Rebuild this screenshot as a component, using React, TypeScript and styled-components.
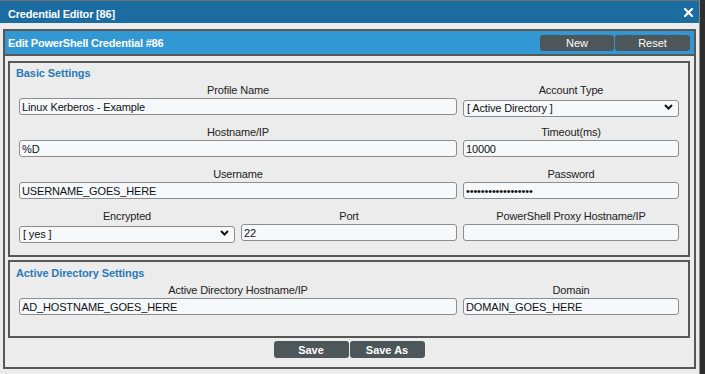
import React from 'react';
import styled, { createGlobalStyle } from 'styled-components';

const GlobalStyle = createGlobalStyle`
  html, body {
    margin: 0;
    padding: 0;
    background: #2e2e2e;
    font-family: "Liberation Sans", Arial, sans-serif;
  }
`;

const Dialog = styled.div`
  width: 699px;
  height: 373px;
  background: #ececec;
  border-top: 1px solid #6e6e6e;
  border-right: 1px solid #8a8a8a;
  display: flex;
  flex-direction: column;
`;

const TitleBar = styled.div`
  height: 22px;
  background: #1b6ca0;
  display: flex;
  align-items: center;
  justify-content: space-between;
  padding: 0 6px 0 8px;
  flex-shrink: 0;
`;

const TitleText = styled.span`
  color: #fff;
  font-size: 11px;
  font-weight: bold;
  line-height: 14px;
  letter-spacing: -0.2px;
  margin-top: 4px;
`;

const Body = styled.div`
  padding: 6px 3px 0 3px;
`;

const Frame = styled.div`
  border: 2px solid #575757;
  background: #ececec;
`;

const Header = styled.div`
  height: 23px;
  background: #3298d3;
  border-bottom: 2px solid #575757;
  display: flex;
  align-items: center;
  justify-content: space-between;
  padding: 0 4px 0 3px;
`;

const HeaderTitle = styled.span`
  color: #fff;
  font-size: 11px;
  font-weight: bold;
  line-height: 14px;
  letter-spacing: -0.2px;
  margin-top: 1px;
`;

const ButtonGroup = styled.div`
  display: flex;
  gap: 1px;
`;

const DarkButton = styled.button<{ $w: number; $h: number; $bold?: boolean }>`
  width: ${p => p.$w}px;
  height: ${p => p.$h}px;
  background: #4d5658;
  border: none;
  border-radius: 3px;
  color: #fff;
  font-family: "Liberation Sans", Arial, sans-serif;
  font-size: 11px;
  font-weight: ${p => (p.$bold ? 'bold' : 'normal')};
  padding: 0;
  cursor: pointer;
`;

const Content = styled.div`
  padding: 5px 4px 9px 3px;
  display: flex;
  flex-direction: column;
  gap: 3px;
`;

const Fieldset = styled.div<{ $bottom: number }>`
  border: 2px solid #575757;
  padding: 3px 9px ${p => p.$bottom}px 9px;
`;

const Legend = styled.div<{ $top?: number }>`
  color: #2a7ab5;
  font-size: 11px;
  font-weight: bold;
  line-height: 14px;
  letter-spacing: -0.1px;
  margin: ${p => p.$top ?? 0}px 0 3px -3px;
`;

const Grid = styled.div`
  display: grid;
  grid-template-columns: repeat(3, 1fr);
  column-gap: 6px;
  row-gap: 10px;
`;

const Field = styled.div<{ $span?: number }>`
  grid-column: span ${p => p.$span ?? 1};
  display: flex;
  flex-direction: column;
  min-width: 0;
`;

const Label = styled.label`
  text-align: center;
  color: #222;
  font-size: 11px;
  line-height: 14px;
  letter-spacing: -0.15px;
  margin-bottom: 1px;
  white-space: nowrap;
`;

const TextInput = styled.input`
  box-sizing: border-box;
  height: 17px;
  width: 100%;
  border: 1px solid #8d8d8d;
  border-radius: 3px;
  background: #f6f9fb;
  color: #111;
  font-family: "Liberation Sans", Arial, sans-serif;
  font-size: 11px;
  letter-spacing: -0.15px;
  padding: 0 2px;
  outline: none;
`;

const SelectWrap = styled.div`
  position: relative;
  height: 17px;
`;

const Select = styled.select`
  appearance: none;
  box-sizing: border-box;
  height: 17px;
  width: 100%;
  border: 1px solid #8d8d8d;
  border-radius: 3px;
  background: #f6f9fb;
  color: #111;
  font-family: "Liberation Sans", Arial, sans-serif;
  font-size: 11px;
  letter-spacing: -0.15px;
  padding: 0 16px 0 3px;
  outline: none;
`;

const Chevron = styled.svg`
  position: absolute;
  right: 6px;
  top: 6px;
  pointer-events: none;
`;

const Actions = styled.div`
  display: flex;
  justify-content: center;
  gap: 1px;
`;

const CloseIcon = () => (
  <svg width="9" height="9" viewBox="0 0 9 9">
    <path d="M1 1 L8 8 M8 1 L1 8" stroke="#fff" strokeWidth="2.2" strokeLinecap="square" />
  </svg>
);

const DropSelect = ({ value }: { value: string }) => (
  <SelectWrap>
    <Select defaultValue={value}>
      <option value={value}>{value}</option>
    </Select>
    <Chevron width="9" height="6" viewBox="0 0 9 6">
      <path d="M1 1 L4.5 4.5 L8 1" stroke="#111" strokeWidth="2" fill="none" />
    </Chevron>
  </SelectWrap>
);

export default function App() {
  return (
    <>
      <GlobalStyle />
      <Dialog>
        <TitleBar>
          <TitleText>Credential Editor [86]</TitleText>
          <CloseIcon />
        </TitleBar>
        <Body>
          <Frame>
            <Header>
              <HeaderTitle>Edit PowerShell Credential #86</HeaderTitle>
              <ButtonGroup>
                <DarkButton $w={74} $h={16}>New</DarkButton>
                <DarkButton $w={75} $h={16}>Reset</DarkButton>
              </ButtonGroup>
            </Header>
            <Content>
              <Fieldset $bottom={14}>
                <Legend>Basic Settings</Legend>
                <Grid>
                  <Field $span={2}>
                    <Label>Profile Name</Label>
                    <TextInput defaultValue="Linux Kerberos - Example" />
                  </Field>
                  <Field>
                    <Label>Account Type</Label>
                    <DropSelect value="[ Active Directory ]" />
                  </Field>
                  <Field $span={2}>
                    <Label>Hostname/IP</Label>
                    <TextInput defaultValue="%D" />
                  </Field>
                  <Field>
                    <Label>Timeout(ms)</Label>
                    <TextInput defaultValue="10000" />
                  </Field>
                  <Field $span={2}>
                    <Label>Username</Label>
                    <TextInput defaultValue="USERNAME_GOES_HERE" />
                  </Field>
                  <Field>
                    <Label>Password</Label>
                    <TextInput type="password" defaultValue="passwordgoeshere12" />
                  </Field>
                  <Field>
                    <Label>Encrypted</Label>
                    <DropSelect value="[ yes ]" />
                  </Field>
                  <Field>
                    <Label>Port</Label>
                    <TextInput defaultValue="22" />
                  </Field>
                  <Field>
                    <Label>PowerShell Proxy Hostname/IP</Label>
                    <TextInput defaultValue="" />
                  </Field>
                </Grid>
              </Fieldset>
              <Fieldset $bottom={21}>
                <Legend $top={1}>Active Directory Settings</Legend>
                <Grid>
                  <Field $span={2}>
                    <Label>Active Directory Hostname/IP</Label>
                    <TextInput defaultValue="AD_HOSTNAME_GOES_HERE" />
                  </Field>
                  <Field>
                    <Label>Domain</Label>
                    <TextInput defaultValue="DOMAIN_GOES_HERE" />
                  </Field>
                </Grid>
              </Fieldset>
              <Actions>
                <DarkButton $w={75} $h={17} $bold>Save</DarkButton>
                <DarkButton $w={75} $h={17} $bold>Save As</DarkButton>
              </Actions>
            </Content>
          </Frame>
        </Body>
      </Dialog>
    </>
  );
}
